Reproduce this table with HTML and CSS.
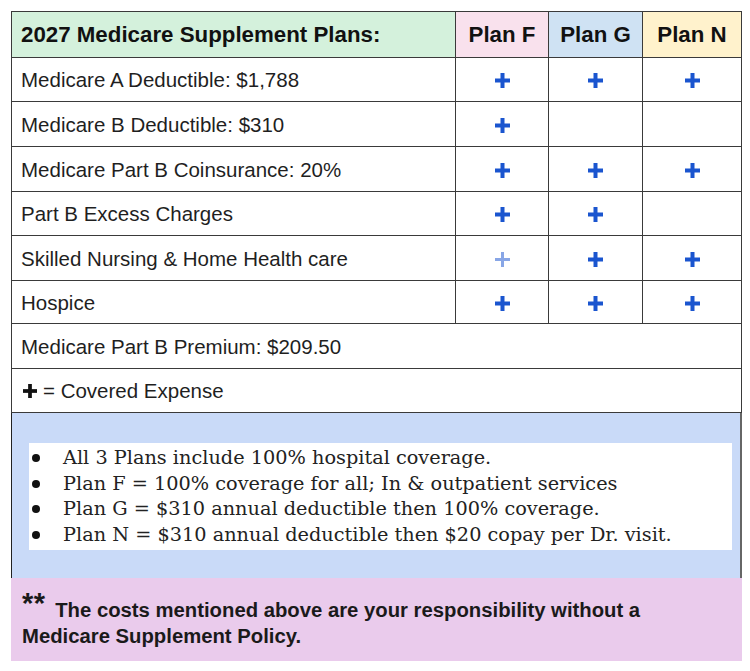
FILE: index.html
```html
<!DOCTYPE html>
<html>
<head>
<meta charset="utf-8">
<link rel="stylesheet" href="styles.css">
</head>
<body>
<div class="page">
  <div class="grid">
    <div class="cell head title">2027 Medicare Supplement Plans:</div>
    <div class="cell head plan pf">Plan F</div>
    <div class="cell head plan pg">Plan G</div>
    <div class="cell head plan pn">Plan N</div>

    <div class="cell label">Medicare A Deductible: $1,788</div>
    <div class="cell mark"><svg class="plus" viewBox="0 0 15 15"><rect x="5.5" y="0" width="4" height="15"/><rect x="0" y="5.5" width="15" height="4"/></svg></div>
    <div class="cell mark"><svg class="plus" viewBox="0 0 15 15"><rect x="5.5" y="0" width="4" height="15"/><rect x="0" y="5.5" width="15" height="4"/></svg></div>
    <div class="cell mark"><svg class="plus" viewBox="0 0 15 15"><rect x="5.5" y="0" width="4" height="15"/><rect x="0" y="5.5" width="15" height="4"/></svg></div>

    <div class="cell label">Medicare B Deductible: $310</div>
    <div class="cell mark"><svg class="plus" viewBox="0 0 15 15"><rect x="5.5" y="0" width="4" height="15"/><rect x="0" y="5.5" width="15" height="4"/></svg></div>
    <div class="cell mark"></div>
    <div class="cell mark"></div>

    <div class="cell label">Medicare Part B Coinsurance: 20%</div>
    <div class="cell mark"><svg class="plus" viewBox="0 0 15 15"><rect x="5.5" y="0" width="4" height="15"/><rect x="0" y="5.5" width="15" height="4"/></svg></div>
    <div class="cell mark"><svg class="plus" viewBox="0 0 15 15"><rect x="5.5" y="0" width="4" height="15"/><rect x="0" y="5.5" width="15" height="4"/></svg></div>
    <div class="cell mark"><svg class="plus" viewBox="0 0 15 15"><rect x="5.5" y="0" width="4" height="15"/><rect x="0" y="5.5" width="15" height="4"/></svg></div>

    <div class="cell label">Part B Excess Charges</div>
    <div class="cell mark"><svg class="plus" viewBox="0 0 15 15"><rect x="5.5" y="0" width="4" height="15"/><rect x="0" y="5.5" width="15" height="4"/></svg></div>
    <div class="cell mark"><svg class="plus" viewBox="0 0 15 15"><rect x="5.5" y="0" width="4" height="15"/><rect x="0" y="5.5" width="15" height="4"/></svg></div>
    <div class="cell mark"></div>

    <div class="cell label">Skilled Nursing &amp; Home Health care</div>
    <div class="cell mark"><svg class="plus faint" viewBox="0 0 15 15"><rect x="6" y="0" width="3" height="15"/><rect x="0" y="6" width="15" height="3"/></svg></div>
    <div class="cell mark"><svg class="plus" viewBox="0 0 15 15"><rect x="5.5" y="0" width="4" height="15"/><rect x="0" y="5.5" width="15" height="4"/></svg></div>
    <div class="cell mark"><svg class="plus" viewBox="0 0 15 15"><rect x="5.5" y="0" width="4" height="15"/><rect x="0" y="5.5" width="15" height="4"/></svg></div>

    <div class="cell label">Hospice</div>
    <div class="cell mark"><svg class="plus" viewBox="0 0 15 15"><rect x="5.5" y="0" width="4" height="15"/><rect x="0" y="5.5" width="15" height="4"/></svg></div>
    <div class="cell mark"><svg class="plus" viewBox="0 0 15 15"><rect x="5.5" y="0" width="4" height="15"/><rect x="0" y="5.5" width="15" height="4"/></svg></div>
    <div class="cell mark"><svg class="plus" viewBox="0 0 15 15"><rect x="5.5" y="0" width="4" height="15"/><rect x="0" y="5.5" width="15" height="4"/></svg></div>

    <div class="cell label wide">Medicare Part B Premium: $209.50</div>
    <div class="cell label wide legend"><svg class="plus black" viewBox="0 0 15 15"><rect x="5.5" y="0" width="4" height="15"/><rect x="0" y="5.5" width="15" height="4"/></svg> = Covered Expense</div>
  </div>

  <div class="notes">
    <ul class="notelist">
      <li>All 3 Plans include 100% hospital coverage.</li>
      <li>Plan F = 100% coverage for all; In &amp; outpatient services</li>
      <li>Plan G = $310 annual deductible then 100% coverage.</li>
      <li>Plan N = $310 annual deductible then $20 copay per Dr. visit.</li>
    </ul>
  </div>

  <div class="footer">
    <span class="stars">**</span> The costs mentioned above are your responsibility without a Medicare Supplement Policy.
  </div>
</div>
</body>
</html>
```

FILE: styles.css
```css
* { box-sizing: border-box; }
html, body { margin: 0; padding: 0; background: #ffffff; }
.page {
  margin: 11px 0 0 11px;
  width: 731px;
  font-family: "Liberation Sans", Arial, sans-serif;
  color: #1f1f1f;
}
.grid {
  display: grid;
  grid-template-columns: 443px 92px 93px 98px;
  grid-template-rows: 45px 43px 44px 44px 43px 44px 42px 44px 43px;
  gap: 1px;
  padding: 1px;
  background: #3a3a3a;
  width: 731px;
}
.cell {
  background: #ffffff;
  display: flex;
  align-items: center;
}
.head { font-weight: bold; font-size: 22.3px; color: #111; padding-top: 1px; }
.title { background: #d4f1dc; padding-left: 9px; }
.plan { justify-content: center; }
.pf { background: #f9e1ed; }
.pg { background: #cfe2f3; }
.pn { background: #fff2cc; }
.label { padding-left: 9px; font-size: 20.5px; padding-top: 1px; }
.wide { grid-column: 1 / -1; }
.mark { justify-content: center; padding-top: 2px; }
.plus { width: 15px; height: 15px; fill: #1a55cf; display: block; }
.plus.faint { fill: #88a6e6; }
.plus.black { fill: #111; width: 14px; height: 14px; margin-right: 6px; }
.legend { padding-left: 11px; }
.notes {
  background: #c9daf8;
  border-left: 1px solid #222;
  border-right: 2px solid #666;
  padding: 30px 8px 28px 17px;
}
.notelist {
  margin: 0;
  background: #ffffff;
  padding: 2px 0 2px 3px;
  list-style: none;
  font-family: "DejaVu Serif", Georgia, serif;
  font-size: 19.3px;
  line-height: 25.7px;
  color: #222;
}
.notelist li::before {
  content: "";
  display: inline-block;
  width: 8px;
  height: 8px;
  border-radius: 50%;
  background: #111;
  margin-right: 23px;
  vertical-align: 2px;
}
.footer {
  background: #eacbec;
  padding: 11px 90px 12px 11px;
  font-weight: bold;
  font-size: 20.3px;
  line-height: 26px;
  color: #1a1a1a;
}
.stars { font-size: 29px; line-height: 1; vertical-align: 4px; letter-spacing: 0.5px; margin-right: 4px; }
```
